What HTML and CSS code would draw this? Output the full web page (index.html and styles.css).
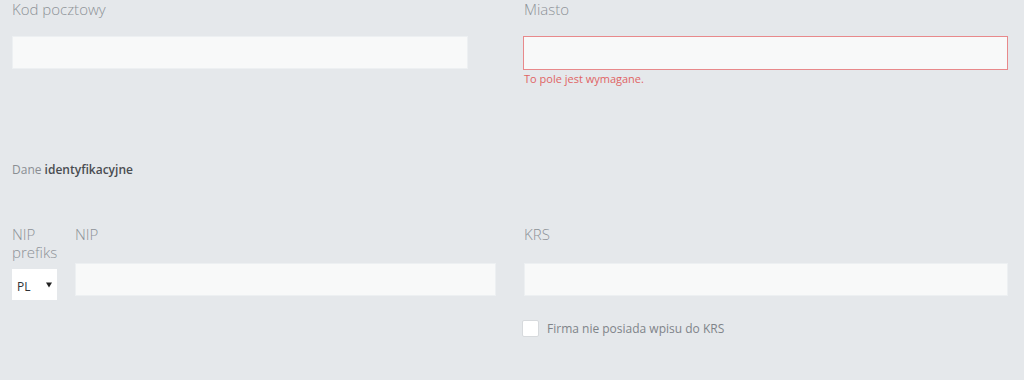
FILE: index.html
```html
<!DOCTYPE html>
<html lang="pl">
<head>
<meta charset="utf-8">
<title>Formularz</title>
<link rel="stylesheet" href="styles.css">
</head>
<body>
<div class="form">
  <div class="row row-address">
    <div class="col">
      <label class="lbl">Kod pocztowy</label>
      <div class="input input-short"></div>
    </div>
    <div class="col">
      <label class="lbl">Miasto</label>
      <div class="input input-error"></div>
      <div class="error">To pole jest wymagane.</div>
    </div>
  </div>

  <h3 class="section-title"><span class="light">Dane</span> <b>identyfikacyjne</b></h3>

  <div class="row row-ids">
    <div class="col col-nip">
      <div class="prefix">
        <label class="lbl lbl-tight">NIP<br>prefiks</label>
        <div class="select">
          <span class="select-value">PL</span>
          <svg class="select-arrow" width="6" height="6" viewBox="0 0 6 6"><path d="M0 0.5 H6 L3 5.5 Z" fill="#222"/></svg>
        </div>
      </div>
      <div class="nip">
        <label class="lbl lbl-tight lbl-gap">NIP</label>
        <div class="input"></div>
      </div>
    </div>
    <div class="col">
      <label class="lbl lbl-tight lbl-gap">KRS</label>
      <div class="input"></div>
      <div class="check-row">
        <span class="checkbox"></span>
        <span class="check-label">Firma nie posiada wpisu do KRS</span>
      </div>
    </div>
  </div>
</div>
</body>
</html>
```

FILE: styles.css
```css
html, body {
  margin: 0;
  padding: 0;
  background: #e5e8eb;
}

body {
  font-family: "Open Sans", "Liberation Sans", sans-serif;
  color: #8d9297;
  height: 380px;
  overflow: hidden;
}

.form {
  margin-top: -1px;
}

.row {
  display: flex;
}

.col {
  flex: 1 1 50%;
  box-sizing: border-box;
  padding: 0 16px 0 12px;
  min-width: 0;
}

.lbl {
  display: block;
  font-size: 15px;
  font-weight: 300;
  line-height: 20px;
  color: #8d9297;
  margin-bottom: 17px;
}

.lbl-tight {
  line-height: 18px;
  margin-bottom: 8px;
}

.lbl-gap {
  margin-bottom: 20px;
}

.input {
  box-sizing: border-box;
  height: 33px;
  background: #f8f9f9;
  border: 1px solid #edf0f2;
}

.input-short {
  width: 456px;
}

.input-error {
  height: 34px;
  border-color: #e8898b;
  margin-left: -1px;
}

.error {
  margin-top: 1px;
  font-size: 11px;
  line-height: 15px;
  color: #e06464;
}

.section-title {
  margin: 76px 0 0 12px;
  font-size: 12px;
  line-height: 16px;
  font-weight: 400;
  color: #8a8e93;
}

.section-title b {
  font-weight: 600;
  color: #4a4d51;
}

.row-ids {
  margin-top: 47px;
}

.col-nip {
  display: flex;
  gap: 18px;
}

.prefix {
  width: 45px;
  flex: none;
}

.nip {
  flex: 1 1 auto;
  min-width: 0;
}

.select {
  box-sizing: border-box;
  height: 31px;
  background: #ffffff;
  display: flex;
  align-items: flex-start;
  padding: 10px 5px 0 5px;
}

.select-value {
  font-size: 12px;
  line-height: 16px;
  color: #2f3236;
}

.select-arrow {
  margin-left: auto;
  margin-top: 3px;
}

.check-row {
  display: flex;
  align-items: flex-start;
  margin-top: 24px;
  margin-left: -2px;
}

.checkbox {
  box-sizing: border-box;
  width: 17px;
  height: 17px;
  background: #ffffff;
  border: 1px solid #d7dadd;
  border-radius: 2px;
  flex: none;
}

.check-label {
  margin-left: 8px;
  font-size: 12px;
  line-height: 17px;
  color: #7f8489;
}
```
